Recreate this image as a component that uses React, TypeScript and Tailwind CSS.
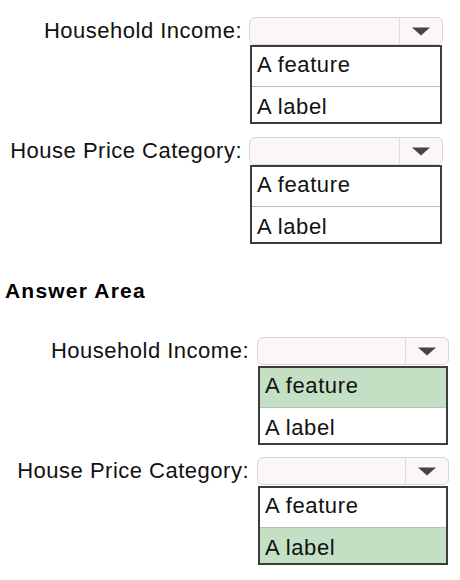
const font = { fontFamily: '"Liberation Sans", Arial, sans-serif' };

function Dropdown() {
  return (
    <div className="flex h-[28px] rounded-[6px] border border-[#d6d6d6] bg-[#fdf6f8]">
      <div className="flex-1" />
      <div className="flex w-[43px] items-center justify-center border-l border-[#dcdcdc]">
        <svg width="20" height="9" viewBox="0 0 20 9">
          <polygon points="1,0.5 19,0.5 10,8.5" fill="#454545" />
        </svg>
      </div>
    </div>
  );
}

function Field({
  label,
  selected,
  bottom,
}: {
  label: string;
  selected?: number;
  bottom?: boolean;
}) {
  const options = ["A feature", "A label"];
  return (
    <div className="flex">
      <div
        className={`flex h-[28px] shrink-0 items-center justify-end text-[22px] leading-[26px] tracking-[0.5px] text-[#111] ${
          bottom ? "w-[257px] pr-[8px]" : "w-[249px] pr-[7px]"
        }`}
      >
        {label}
      </div>
      <div className={bottom ? "w-[192px]" : "w-[194px]"}>
        <Dropdown />
        <div className={`mx-px border-2 border-[#3d3d3d] bg-white ${bottom ? "mt-px" : ""}`}>
          {options.map((opt, i) => (
            <div
              key={opt}
              className={`pl-[5px] text-[22px] leading-[26px] tracking-[0.6px] text-[#111] ${
                i === 0
                  ? "h-[40px] border-b border-[#bdbdbd] pt-[5px]"
                  : "h-[35px] pt-[7px]"
              } ${selected === i ? "bg-[#c3e0c4]" : ""}`}
            >
              {opt}
            </div>
          ))}
        </div>
      </div>
    </div>
  );
}

export default function App() {
  return (
    <div className="h-[580px] w-[460px] overflow-hidden bg-white pt-[17px]" style={font}>
      <Field label="Household Income:" />
      <div className="mt-[13px]">
        <Field label="House Price Category:" />
      </div>

      {/* Answer area */}
      <div className="mt-[35px] pl-[5px] text-[21px] font-bold leading-[24px] tracking-[1.2px] text-black">
        Answer Area
      </div>

      <div className="mt-[34px]">
        <Field label="Household Income:" selected={0} bottom />
      </div>
      <div className="mt-[12px]">
        <Field label="House Price Category:" selected={1} bottom />
      </div>
    </div>
  );
}
